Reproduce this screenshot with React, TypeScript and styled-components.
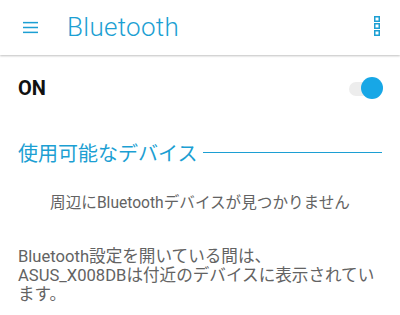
import React from 'react';
import styled, { createGlobalStyle } from 'styled-components';

const GlobalStyle = createGlobalStyle`
  html, body {
    margin: 0;
    padding: 0;
    background: #ffffff;
    font-family: Roboto, "Noto Sans CJK JP", sans-serif;
  }
  * { box-sizing: border-box; }
`;

const BLUE = '#1c9fd3';

export default function App() {
  return (
    <>
      <GlobalStyle />
      <Screen>
        <AppBar>
          <MenuIcon viewBox="0 0 16 16">
            <rect x="0" y="2" width="16" height="1.6" fill={BLUE} />
            <rect x="0" y="7.2" width="16" height="1.6" fill={BLUE} />
            <rect x="0" y="12.4" width="16" height="1.6" fill={BLUE} />
          </MenuIcon>
          <Title>Bluetooth</Title>
          <Spacer />
          <KebabIcon viewBox="0 0 6 20">
            <rect x="0.75" y="0.75" width="4.5" height="4.5" fill="none" stroke={BLUE} strokeWidth="1.5" />
            <rect x="0.75" y="7.75" width="4.5" height="4.5" fill="none" stroke={BLUE} strokeWidth="1.5" />
            <rect x="0.75" y="14.75" width="4.5" height="4.5" fill="none" stroke={BLUE} strokeWidth="1.5" />
          </KebabIcon>
        </AppBar>

        <ToggleRow>
          <ToggleLabel>ON</ToggleLabel>
          <Switch>
            <Track />
            <Thumb />
          </Switch>
        </ToggleRow>

        <SectionHeader>
          <SectionTitle>使用可能なデバイス</SectionTitle>
          <SectionLine />
        </SectionHeader>

        <EmptyText>周辺にBluetoothデバイスが見つかりません</EmptyText>

        <InfoText>
          <InfoLine>Bluetooth設定を開いている間は、</InfoLine>
          <InfoLine>ASUS_X008DBは付近のデバイスに表示されてい</InfoLine>
          <InfoLine>ます。</InfoLine>
        </InfoText>
      </Screen>
    </>
  );
}

const Screen = styled.div`
  width: 400px;
  height: 315px;
  overflow: hidden;
  background: #ffffff;
`;

const AppBar = styled.header`
  height: 55px;
  display: flex;
  align-items: center;
  padding: 0 20px 0 23px;
  background: #ffffff;
  box-shadow: 0 1px 2px rgba(0, 0, 0, 0.25);
  position: relative;
`;

const MenuIcon = styled.svg`
  width: 15px;
  height: 15px;
  margin-right: 29px;
`;

const Title = styled.h1`
  margin: 0;
  font-size: 26px;
  font-weight: 300;
  color: ${BLUE};
  letter-spacing: 0.3px;
  margin-top: -2px;
`;

const Spacer = styled.div`
  flex: 1;
`;

const KebabIcon = styled.svg`
  width: 6px;
  height: 20px;
  margin-top: -3px;
`;

const ToggleRow = styled.div`
  display: flex;
  align-items: center;
  justify-content: space-between;
  padding: 0 17px 0 18px;
  height: 66px;
`;

const ToggleLabel = styled.span`
  font-size: 20px;
  font-weight: 700;
  color: #111111;
`;

const Switch = styled.div`
  position: relative;
  width: 38px;
  height: 22px;
`;

const Track = styled.div`
  position: absolute;
  left: 4px;
  right: 4px;
  top: 5px;
  height: 14px;
  border-radius: 7px;
  background: #ededed;
`;

const Thumb = styled.div`
  position: absolute;
  right: 0;
  top: 0;
  width: 22px;
  height: 22px;
  border-radius: 50%;
  background: #17a7e6;
`;

const SectionHeader = styled.div`
  display: flex;
  align-items: center;
  gap: 6px;
  padding: 0 18px;
  margin-top: 17px;
`;

const SectionTitle = styled.h2`
  margin: 0;
  font-size: 20px;
  font-weight: 400;
  color: ${BLUE};
  white-space: nowrap;
`;

const SectionLine = styled.div`
  flex: 1;
  height: 1px;
  background: ${BLUE};
`;

const EmptyText = styled.p`
  margin: 23px 0 0;
  text-align: center;
  font-size: 15.6px;
  color: #636363;
`;

const InfoText = styled.div`
  margin: 35px 0 0;
  padding: 0 18px;
  font-size: 16.6px;
  line-height: 19px;
  color: #636363;
`;

const InfoLine = styled.div`
  white-space: nowrap;
`;
